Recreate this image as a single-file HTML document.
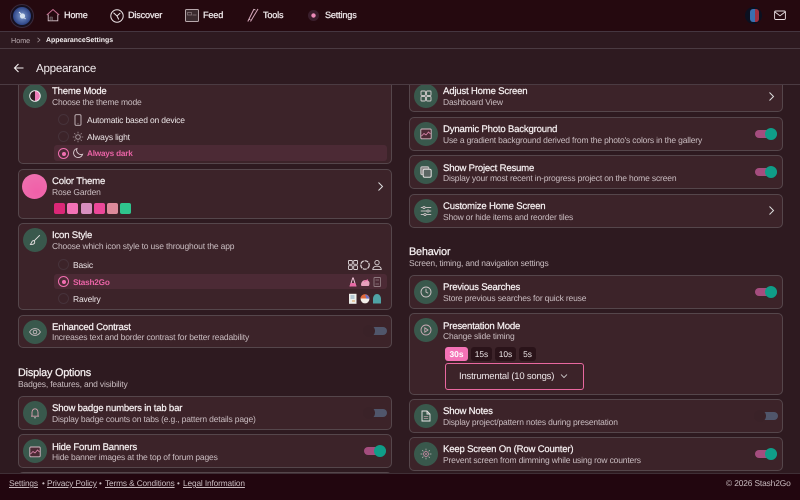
<!DOCTYPE html>
<html><head><meta charset="utf-8"><style>
*{box-sizing:border-box}
html,body{margin:0;padding:0;width:800px;height:500px;overflow:hidden;background:#2e1a20}
body{font-family:"Liberation Sans",sans-serif;color:#f3edee;position:relative;text-rendering:geometricPrecision}
#w{position:absolute;left:0;top:0;width:800px;height:500px;overflow:hidden;filter:blur(.3px)}
.a{position:absolute;white-space:nowrap}
.card{position:absolute;background:#3c2329;border:1px solid #55464b;border-radius:5px;width:374px}
.ic{position:absolute;width:24px;height:24px;border-radius:50%;background:#39584c}
.t{position:absolute;margin-top:1px;font-size:9.6px;letter-spacing:-.2px;line-height:12px;white-space:nowrap;color:#f6f0f1;font-weight:400;-webkit-text-stroke:.22px #f6f0f1}
.s{position:absolute;margin-top:1px;font-size:8.5px;letter-spacing:-.165px;line-height:11px;white-space:nowrap;color:#c9bcc0}
.on{position:absolute;width:22px;height:8px;border-radius:4px;background:#a44d7e}
.on i{position:absolute;right:0;top:-2.5px;width:12px;height:12px;border-radius:50%;background:#0f9d88}
.off{position:absolute;width:23px;height:8px;border-radius:4px;background:#50566b}
.off i{position:absolute;left:-1px;top:-2.5px;width:12px;height:12px;border-radius:50%;background:#3a2228}
.r{position:absolute;width:11px;height:11px;border-radius:50%;border:1px solid #46323a}
.rs{border-color:#f06fb0}
.rs i{position:absolute;left:2.5px;top:2.5px;width:4px;height:4px;border-radius:50%;background:#f06fb0}
.o{position:absolute;margin-top:1px;font-size:8.5px;letter-spacing:-.17px;line-height:11px;white-space:nowrap;color:#ece5e7}
.p{color:#e863a5;font-weight:700;font-size:8.2px;letter-spacing:-.2px}
svg{position:absolute;overflow:visible;fill:none}
.sw{position:absolute;top:203px;width:11px;height:11px;border-radius:2px}
.tb{position:absolute;top:347px;height:14px;border-radius:3px;background:#2a1319;color:#ece5e7;font-size:8.4px;line-height:14px;text-align:center}
.nav{position:absolute;top:10px;font-size:9.1px;letter-spacing:-.16px;line-height:11px;color:#ebe4e6;-webkit-text-stroke:.3px #ebe4e6}
.fl{position:absolute;top:478px;font-size:8.3px;letter-spacing:-.13px;line-height:11px;color:#c9bcc0;text-decoration:underline;white-space:nowrap}
.d{position:absolute;top:478px;font-size:8px;line-height:11px;color:#c9bcc0}
.h{position:absolute;font-size:10.9px;letter-spacing:-.22px;line-height:13px;color:#f6f0f1;-webkit-text-stroke:.25px #f6f0f1;white-space:nowrap}
</style></head><body><div id="w">

<!-- scrolling content -->
<div class="card" style="left:18px;top:70px;height:94px"></div>
<div class="ic" style="left:23px;top:84px"></div>
<svg style="left:29px;top:90px" width="12" height="12" viewBox="0 0 12 12"><path d="M6 .7a5.3 5.3 0 0 1 0 10.6z" fill="#ee7db8"/><path d="M6 .7a5.3 5.3 0 0 0 0 10.6z" fill="#2e1a20"/><circle cx="6" cy="6" r="5.3" stroke="#eee" stroke-width=".9"/></svg>
<div class="t" style="left:52px;top:85px">Theme Mode</div>
<div class="s" style="left:52px;top:96px">Choose the theme mode</div>
<div class="r" style="left:58px;top:114px"></div>
<svg style="left:73px;top:114px" width="10" height="12" viewBox="0 0 10 12"><rect x="2" y=".7" width="6" height="10.6" rx="1.2" stroke="#c9bcc0" stroke-width=".9"/><path d="M4.500 9.800h1" stroke="#c9bcc0" stroke-width=".7"/></svg>
<div class="o" style="left:87px;top:114px">Automatic based on device</div>
<div class="r" style="left:58px;top:131px"></div>
<svg style="left:72px;top:131px" width="12" height="12" viewBox="0 0 12 12"><circle cx="6" cy="6" r="2.300" stroke="#a5969a"/><path d="M6 .8v1.600M6 9.600v1.600M.8 6h1.600M9.600 6h1.600M2.300 2.300l1.100 1.100M8.600 8.600l1.100 1.100M2.300 9.700l1.100-1.100M8.600 3.400l1.100-1.100" stroke="#a5969a" stroke-width=".8"/></svg>
<div class="o" style="left:87px;top:131px">Always light</div>
<div class="a" style="left:54px;top:145px;width:333px;height:16px;border-radius:3px;background:#4c2a35"></div>
<div class="r rs" style="left:58px;top:148px"><i></i></div>
<svg style="left:72px;top:147px" width="12" height="12" viewBox="0 0 12 12"><path d="M5 1.500a4.600 4.600 0 1 0 5.600 5.800A4.400 4.400 0 0 1 5 1.500z" stroke="#ddd0d4" stroke-width=".9"/></svg>
<div class="o p" style="left:87px;top:147px">Always dark</div>

<div class="card" style="left:18px;top:169px;height:50px"></div>
<div class="a" style="left:22px;top:174px;width:25px;height:25px;border-radius:50%;background:radial-gradient(circle at 60% 70%,#f05fa8,#ee73b0)"></div>
<div class="t" style="left:52px;top:175px">Color Theme</div>
<div class="s" style="left:52px;top:186px">Rose Garden</div>
<svg style="left:376px;top:181px" width="9" height="11" viewBox="0 0 9 11"><path d="M2.500 1.500l4 4-4 4" stroke="#ddd" stroke-width="1"/></svg>
<div class="sw" style="left:54px;background:#db2777"></div>
<div class="sw" style="left:67px;background:#f472b6"></div>
<div class="sw" style="left:81px;background:#d88fbf"></div>
<div class="sw" style="left:94px;background:#ec4899"></div>
<div class="sw" style="left:107px;background:#dd8a9b"></div>
<div class="sw" style="left:120px;background:#2fc48d"></div>

<div class="card" style="left:18px;top:223px;height:87px"></div>
<div class="ic" style="left:23px;top:228px"></div>
<svg style="left:29px;top:234px" width="12" height="12" viewBox="0 0 12 12"><path d="M10.800 1.200L5.200 6.800M5 6.600c-1.600 0-2.200 1-2.400 2L1.400 10.400c1.900.2 3.800-.1 4.300-1.800.1-.5 0-1.200-.7-2z" stroke="#e8e2e3" stroke-width=".9"/></svg>
<div class="t" style="left:52px;top:229px">Icon Style</div>
<div class="s" style="left:52px;top:240px">Choose which icon style to use throughout the app</div>
<div class="r" style="left:58px;top:259px"></div>
<div class="o" style="left:73px;top:259px">Basic</div>
<svg style="left:347px;top:259px" width="36" height="12" viewBox="0 0 36 12" stroke="#ddd5d7" stroke-width=".9"><rect x="1.500" y="1.500" width="3.800" height="3.800" rx=".6"/><rect x="6.700" y="1.500" width="3.800" height="3.800" rx=".6"/><rect x="1.500" y="6.700" width="3.800" height="3.800" rx=".6"/><rect x="6.700" y="6.700" width="3.800" height="3.800" rx=".6"/><circle cx="18" cy="6" r="4.200" stroke-dasharray="4 .8" stroke-width="1.200"/><circle cx="30" cy="3.600" r="2.200"/><path d="M25.800 10.600c0-2.400 1.800-3.400 4.200-3.400s4.200 1 4.200 3.400z"/></svg>
<div class="a" style="left:54px;top:274px;width:333px;height:15px;border-radius:3px;background:#4c2a35"></div>
<div class="r rs" style="left:58px;top:276px"><i></i></div>
<div class="o p" style="left:73px;top:276px">Stash2Go</div>
<svg style="left:347px;top:276px" width="36" height="12" viewBox="0 0 36 12"><path d="M5.900 1.500L3 10.500M6.100 1.500L9 10.500" stroke="#eec3d6" stroke-width="1"/><path d="M3.500 7h5l1 3.500h-7z" fill="#e86aa6"/><path d="M14 9c0-3 2-5 4.500-5s4 1.500 4 3-.5 3-1 3h-6.500c-.5 0-1-.4-1-1z" fill="#e8a0bc"/><path d="M17 5.500l4-1.800" stroke="#e86aa6"/><rect x="27" y="1.500" width="6.500" height="9" rx=".8" stroke="#8f7a80" stroke-width=".9"/><path d="M28.500 4h3.500M28.500 8h3.500" stroke="#8f7a80" stroke-width=".8"/></svg>
<div class="r" style="left:58px;top:293px"></div>
<div class="o" style="left:73px;top:293px">Ravelry</div>
<svg style="left:347px;top:293px" width="36" height="12" viewBox="0 0 36 12"><rect x="2" y=".8" width="7.500" height="10" fill="#eeeeea"/><path d="M3.500 3h4M3.500 5h4" stroke="#5b8bb0" stroke-width=".7"/><path d="M5 8h3" stroke="#d9a05a" stroke-width="1"/><circle cx="18" cy="6" r="4.400" fill="#f3efe9"/><path d="M13.600 5.500a4.400 4.400 0 0 1 8.800 0z" fill="#e06a3c"/><path d="M18 1.600a4.400 4.400 0 0 1 4.400 4h-3z" fill="#6b74c8"/><path d="M26 10.500V6c0-2.500 1.500-5 4-5s4 2.500 4 5v4.500z" fill="#4fa3a5"/></svg>

<div class="card" style="left:18px;top:315px;height:33px"></div>
<div class="ic" style="left:23px;top:320px"></div>
<svg style="left:29px;top:326px" width="12" height="12" viewBox="0 0 12 12"><path d="M.6 6C2 3.600 3.800 2.600 6 2.600S10 3.600 11.400 6C10 8.400 8.200 9.400 6 9.400S2 8.400.6 6z" stroke="#c9bcc0" stroke-width=".9"/><circle cx="6" cy="6" r="1.800" stroke="#c9bcc0" stroke-width=".9"/></svg>
<div class="t" style="left:52px;top:321px">Enhanced Contrast</div>
<div class="s" style="left:52px;top:331px">Increases text and border contrast for better readability</div>
<div class="off" style="left:364px;top:327px"><i></i></div>

<div class="h" style="left:18px;top:367px">Display Options</div>
<div class="s" style="left:18px;top:378px">Badges, features, and visibility</div>

<div class="card" style="left:18px;top:396px;height:34px"></div>
<div class="ic" style="left:23px;top:401px"></div>
<svg style="left:29px;top:407px" width="12" height="12" viewBox="0 0 12 12"><path d="M2 9.200h8M3 9V5.200C3 3.300 4.300 1.800 6 1.800s3 1.500 3 3.400V9" stroke="#d8a0b0" stroke-width=".9"/><path d="M5.300 10.800h1.400" stroke="#eee" stroke-width=".9"/></svg>
<div class="t" style="left:52px;top:402px">Show badge numbers in tab bar</div>
<div class="s" style="left:52px;top:413px">Display badge counts on tabs (e.g., pattern details page)</div>
<div class="off" style="left:364px;top:409px"><i></i></div>

<div class="card" style="left:18px;top:434px;height:34px"></div>
<div class="ic" style="left:23px;top:439px"></div>
<svg style="left:29px;top:446px" width="12" height="12" viewBox="0 0 12 12"><rect x=".8" y="1" width="10.400" height="9.800" rx="1" fill="#4c2a35" stroke="#d8b8c4" stroke-width=".9"/><path d="M1.500 8l2.500-2.500 2 1.500 2.500-3 2 2" stroke="#e08ab0" stroke-width=".8"/></svg>
<div class="t" style="left:52px;top:441px">Hide Forum Banners</div>
<div class="s" style="left:52px;top:451px">Hide banner images at the top of forum pages</div>
<div class="on" style="left:364px;top:447px"><i></i></div>
<div class="card" style="left:18px;top:472px;height:30px"></div>

<!-- right column -->
<div class="card" style="left:409px;top:70px;height:42px"></div>
<div class="ic" style="left:414px;top:84px"></div>
<svg style="left:420px;top:90px" width="12" height="12" viewBox="0 0 12 12" stroke="#d8d0d2" stroke-width=".9"><rect x="1" y="1" width="4.400" height="4.400" rx=".7"/><rect x="6.600" y="1" width="4.400" height="4.400" rx=".7"/><rect x="1" y="6.600" width="4.400" height="4.400" rx=".7"/><rect x="6.600" y="6.600" width="4.400" height="4.400" rx=".7"/></svg>
<div class="t" style="left:443px;top:85px">Adjust Home Screen</div>
<div class="s" style="left:443px;top:96px">Dashboard View</div>
<svg style="left:767px;top:91px" width="9" height="11" viewBox="0 0 9 11"><path d="M2.500 1.500l4 4-4 4" stroke="#ddd" stroke-width="1"/></svg>

<div class="card" style="left:409px;top:117px;height:34px"></div>
<div class="ic" style="left:414px;top:122px"></div>
<svg style="left:420px;top:128px" width="12" height="12" viewBox="0 0 12 12"><rect x=".8" y="1" width="10.400" height="9.800" rx="1" fill="#4c2a35" stroke="#d8b8c4" stroke-width=".9"/><path d="M1.500 8l2.500-2.500 2 1.500 2.500-3 2 2" stroke="#e08ab0" stroke-width=".8"/></svg>
<div class="t" style="left:443px;top:123px">Dynamic Photo Background</div>
<div class="s" style="left:443px;top:134px">Use a gradient background derived from the photo's colors in the gallery</div>
<div class="on" style="left:755px;top:130px"><i></i></div>

<div class="card" style="left:409px;top:155px;height:34px"></div>
<div class="ic" style="left:414px;top:160px"></div>
<svg style="left:420px;top:166px" width="12" height="12" viewBox="0 0 12 12"><rect x=".8" y=".8" width="8" height="8" rx="1.500" fill="#8d8a8a" stroke="#c4c0c0"/><rect x="3.200" y="3.200" width="8" height="8" rx="1.500" fill="#5b6663" stroke="#e4e0e0"/></svg>
<div class="t" style="left:443px;top:162px">Show Project Resume</div>
<div class="s" style="left:443px;top:172px">Display your most recent in-progress project on the home screen</div>
<div class="on" style="left:755px;top:168px"><i></i></div>

<div class="card" style="left:409px;top:194px;height:34px"></div>
<div class="ic" style="left:414px;top:199px"></div>
<svg style="left:420px;top:205px" width="12" height="12" viewBox="0 0 12 12" stroke="#c4bcbe" stroke-width=".9"><path d="M.8 2.500h10.400M.8 6h10.400M.8 9.500h10.400"/><circle cx="4" cy="2.500" r="1.100" fill="#39584c"/><circle cx="8" cy="6" r="1.100" fill="#39584c"/><circle cx="5" cy="9.500" r="1.100" fill="#39584c"/></svg>
<div class="t" style="left:443px;top:200px">Customize Home Screen</div>
<div class="s" style="left:443px;top:211px">Show or hide items and reorder tiles</div>
<svg style="left:767px;top:205px" width="9" height="11" viewBox="0 0 9 11"><path d="M2.500 1.500l4 4-4 4" stroke="#ddd" stroke-width="1"/></svg>

<div class="h" style="left:409px;top:246px">Behavior</div>
<div class="s" style="left:409px;top:257px">Screen, timing, and navigation settings</div>

<div class="card" style="left:409px;top:275px;height:34px"></div>
<div class="ic" style="left:414px;top:280px"></div>
<svg style="left:420px;top:286px" width="12" height="12" viewBox="0 0 12 12" stroke="#d0c4c8" stroke-width=".9"><circle cx="6" cy="6" r="5"/><path d="M6 2.800V6l2.200 1.300"/></svg>
<div class="t" style="left:443px;top:281px">Previous Searches</div>
<div class="s" style="left:443px;top:292px">Store previous searches for quick reuse</div>
<div class="on" style="left:755px;top:288px"><i></i></div>

<div class="card" style="left:409px;top:313px;height:82px"></div>
<div class="ic" style="left:414px;top:318px"></div>
<svg style="left:420px;top:324px" width="12" height="12" viewBox="0 0 12 12" stroke="#c8a8b4" stroke-width=".9"><circle cx="6" cy="6" r="5"/><path d="M4.800 3.800L8 6l-3.200 2.200z"/></svg>
<div class="t" style="left:443px;top:320px">Presentation Mode</div>
<div class="s" style="left:443px;top:330px">Change slide timing</div>
<div class="tb" style="left:445px;width:23px;background:#f472b6;color:#fff;font-weight:700">30s</div>
<div class="tb" style="left:471px;width:21px">15s</div>
<div class="tb" style="left:495px;width:21px">10s</div>
<div class="tb" style="left:519px;width:17px">5s</div>
<div class="a" style="left:445px;top:363px;width:139px;height:27px;border:1.500px solid #e8689f;border-radius:3px"></div>
<div class="a" style="left:459px;top:370px;font-size:9.500px;letter-spacing:-.2px;line-height:13px;color:#ece5e7">Instrumental (10 songs)</div>
<svg style="left:560px;top:373px" width="8" height="6" viewBox="0 0 8 6"><path d="M1 1.500l3 3 3-3" stroke="#ddd" stroke-width=".8"/></svg>

<div class="card" style="left:409px;top:399px;height:34px"></div>
<div class="ic" style="left:414px;top:404px"></div>
<svg style="left:420px;top:410px" width="12" height="12" viewBox="0 0 12 12" stroke="#ece6e7" stroke-width=".9"><path d="M2 1h5l3 3v7H2zM7 1v3h3"/><path d="M3.800 6.500h4.400M3.800 8.500h4.400" stroke="#9a8c90"/></svg>
<div class="t" style="left:443px;top:405px">Show Notes</div>
<div class="s" style="left:443px;top:416px">Display project/pattern notes during presentation</div>
<div class="off" style="left:755px;top:412px"><i></i></div>

<div class="card" style="left:409px;top:437px;height:34px"></div>
<div class="ic" style="left:414px;top:442px"></div>
<svg style="left:420px;top:448px" width="12" height="12" viewBox="0 0 12 12"><circle cx="6" cy="6" r="2.400" stroke="#d08aa8" stroke-width=".9"/><circle cx="6" cy="6" r=".9" fill="#d08aa8"/><path d="M6 .6v1.800M6 9.600v1.800M.6 6h1.800M9.600 6h1.800M2.200 2.200l1.200 1.200M8.600 8.600l1.200 1.200M2.200 9.800l1.200-1.200M8.600 3.400l1.200-1.200" stroke="#c4bcbe" stroke-width=".7"/></svg>
<div class="t" style="left:443px;top:443px">Keep Screen On (Row Counter)</div>
<div class="s" style="left:443px;top:454px">Prevent screen from dimming while using row counters</div>
<div class="on" style="left:755px;top:450px"><i></i></div>

<!-- page title -->
<div class="a" style="left:0;top:49px;width:800px;height:36px;background:#2e1a20;border-bottom:1px solid #4b3b42"></div>
<svg style="left:13px;top:62px" width="12" height="12" viewBox="0 0 12 12"><path d="M10.500 6h-9M5.500 2L1.500 6l4 4" stroke="#f4f0f0" stroke-width="1.100"/></svg>
<div class="a" style="left:36px;top:61px;font-size:11.600px;letter-spacing:-.25px;line-height:15px;color:#f2ecee">Appearance</div>

<!-- breadcrumb -->
<div class="a" style="left:0;top:31px;width:800px;height:18px;background:#2e1a20;border-top:1px solid #453640;border-bottom:1px solid #4b3b42"></div>
<div class="a" style="left:11px;top:36px;font-size:7.200px;line-height:10px;color:#bcaeb3">Home</div>
<svg style="left:36px;top:37px" width="6" height="6" viewBox="0 0 6 6"><path d="M1.500 .8l2.500 2.200-2.500 2.200" stroke="#a89a9e" stroke-width=".7"/></svg>
<div class="a" style="left:46px;top:36px;font-size:6.950px;line-height:10px;color:#f4eff0;font-weight:700">AppearanceSettings</div>

<!-- top nav -->
<div class="a" style="left:0;top:0;width:800px;height:31px;background:#25090f"></div>
<div class="a" style="left:10px;top:4px;width:24px;height:24px;border-radius:50%;background:#16101f;border:1px solid #3a2a3c"></div>
<div class="a" style="left:13px;top:7px;width:18px;height:18px;border-radius:50%;background:radial-gradient(circle at 50% 50%,#7f9cd0,#2d4486 70%)"></div>
<svg style="left:17px;top:10px" width="11" height="11" viewBox="0 0 11 11"><circle cx="5.500" cy="6" r="2.600" fill="#d6e2f0"/><path d="M2 2l2 2M8.500 9l-1-1" stroke="#e4eaf2"/></svg>
<svg style="left:46px;top:8px" width="14" height="14" viewBox="0 0 14 14"><path d="M.8 7L7 1.500 13.200 7" stroke="#c86f92" stroke-width="1"/><path d="M2.200 6.500v6.300h9.600V6.500" stroke="#d8c4cc" stroke-width=".9"/><path d="M4 9h2.500v3.500H4z" fill="#4a3a3f" stroke="#8a7a7f" stroke-width=".5"/></svg>
<div class="nav" style="left:64px">Home</div>
<svg style="left:110px;top:9px" width="14" height="14" viewBox="0 0 14 14"><circle cx="7" cy="7" r="6.200" stroke="#ebe4e6" stroke-width="1"/><path d="M3.500 3.800L7 7l3.300-3M7 7l1.800 3.500" stroke="#ebe4e6" stroke-width="1"/></svg>
<div class="nav" style="left:128px">Discover</div>
<svg style="left:185px;top:9px" width="14" height="13" viewBox="0 0 14 13"><rect x=".5" y=".5" width="13" height="12" rx="1" fill="#3a2a2e" stroke="#b8a8ac"/><path d="M2.500 3.500h4v2.500h-4zM7.500 6h4" stroke="#8a7a7e" stroke-width=".7"/></svg>
<div class="nav" style="left:203px">Feed</div>
<svg style="left:247px;top:8px" width="12" height="14" viewBox="0 0 12 14"><path d="M.8 13.500L7 1M3.500 13.500L11 1" stroke="#d8a8bc" stroke-width="1"/><path d="M2 11l1.500 1M7 1.500l1.500.6" stroke="#f0e0e6" stroke-width=".7"/></svg>
<div class="nav" style="left:263px">Tools</div>
<div class="a" style="left:308px;top:10px;width:11px;height:11px;border-radius:50%;background:radial-gradient(circle,#ec8ab8 0 1.800px,#3a1e2c 2.500px,#3a1e2c 100%)"></div>
<div class="nav" style="left:325px">Settings</div>
<div class="a" style="left:745px;top:7px;width:17px;height:17px;border-radius:50%;background:#0b1020"></div>
<div class="a" style="left:750px;top:9px;width:5px;height:13px;border-radius:3px 0 0 3px;background:#3a70b0"></div>
<div class="a" style="left:755px;top:9px;width:4px;height:13px;border-radius:0 3px 3px 0;background:#a03040"></div>
<svg style="left:774px;top:10px" width="12" height="11" viewBox="0 0 12 11"><rect x=".6" y="1" width="10.800" height="8.500" rx="1.200" stroke="#e8dfe2" stroke-width=".9"/><path d="M1 2l5 3.800L11 2" stroke="#e8dfe2" stroke-width=".9"/></svg>

<!-- footer -->
<div class="a" style="left:0;top:473px;width:800px;height:27px;background:#22060f;border-top:1px solid #3f2f36"></div>
<div class="fl" style="left:9px">Settings</div><div class="d" style="left:42px">•</div>
<div class="fl" style="left:47px">Privacy Policy</div><div class="d" style="left:99px">•</div>
<div class="fl" style="left:105px">Terms &amp; Conditions</div><div class="d" style="left:177px">•</div>
<div class="fl" style="left:183px">Legal Information</div>
<div class="a" style="left:726px;top:478px;font-size:8.400px;letter-spacing:-.14px;line-height:11px;color:#c9bcc0">© 2026 Stash2Go</div>
</div></body></html>
